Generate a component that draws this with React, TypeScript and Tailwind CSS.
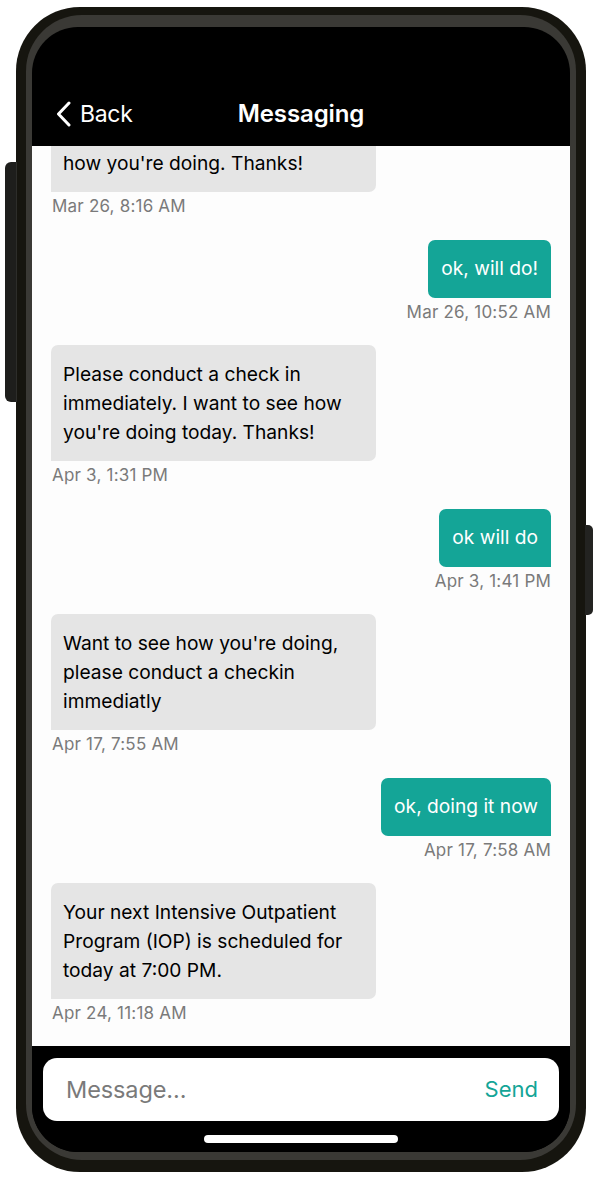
import React from "react";

type Msg = { side: "in" | "out"; lines: string[]; time: string; cut?: boolean };

const messages: Msg[] = [
  { side: "in", lines: ["how you're doing. Thanks!"], time: "Mar 26, 8:16 AM", cut: true },
  { side: "out", lines: ["ok, will do!"], time: "Mar 26, 10:52 AM" },
  { side: "in", lines: ["Please conduct a check in", "immediately. I want to see how", "you're doing today. Thanks!"], time: "Apr 3, 1:31 PM" },
  { side: "out", lines: ["ok will do"], time: "Apr 3, 1:41 PM" },
  { side: "in", lines: ["Want to see how you're doing,", "please conduct a checkin", "immediatly"], time: "Apr 17, 7:55 AM" },
  { side: "out", lines: ["ok, doing it now"], time: "Apr 17, 7:58 AM" },
  { side: "in", lines: ["Your next Intensive Outpatient", "Program (IOP) is scheduled for", "today at 7:00 PM."], time: "Apr 24, 11:18 AM" },
];

const font = { fontFamily: "Inter, 'Noto Sans', sans-serif" };

function Bubble({ m }: { m: Msg }) {
  if (m.side === "in") {
    return (
      <div className="flex flex-col items-start">
        <div
          className={
            m.cut
              ? "w-[325px] rounded-[7px] rounded-bl-none bg-[#e5e5e5] px-[12px] pt-[72.5px] pb-[14.5px] text-[19.2px] leading-[29px] text-black"
              : "w-[325px] rounded-[7px] rounded-bl-none bg-[#e5e5e5] px-[12px] py-[14.5px] text-[19.2px] leading-[29px] text-black"
          }
        >
          {m.lines.map((l, i) => (
            <div key={i} className="whitespace-nowrap">{l}</div>
          ))}
        </div>
        <div className="mt-[3px] pl-[1px] text-[17px] leading-[22px] text-[#7a7a7a] tracking-[0.2px]">{m.time}</div>
      </div>
    );
  }
  return (
    <div className="flex flex-col items-end">
      <div className="rounded-[7px] rounded-br-none bg-[#14a597] px-[13px] py-[14.5px] text-[19.2px] leading-[29px] text-white">
        {m.lines.map((l, i) => (
          <div key={i} className="whitespace-nowrap">{l}</div>
        ))}
      </div>
      <div className="mt-[3px] text-[17px] leading-[22px] text-[#7a7a7a] tracking-[0.2px]">{m.time}</div>
    </div>
  );
}

export default function App() {
  return (
    <div className="w-[600px] h-[1180px] bg-white pt-[7px] pl-[16px]" style={font}>
      <div className="relative w-[570px] h-[1165px] rounded-[64px] bg-[#16150f] pt-[8px] px-[10px] pb-[12px]">
        <div className="absolute left-[-11px] top-[155px] w-[12px] h-[240px] rounded-l-[6px] bg-[#1e1e1c] border-r border-[#2d2d2a]" />
        <div className="absolute right-[-7px] top-[518px] w-[8px] h-[90px] rounded-r-[5px] bg-[#232321]" />
        <div className="h-full rounded-[56px] bg-[#3a3935] pt-[12px] px-[6px] pb-[8px]">
          <div className="h-full rounded-[46px] bg-black overflow-hidden flex flex-col">
            <div className="h-[119px] shrink-0 pt-[72px]">
              <div className="grid grid-cols-[1fr_auto_1fr] items-center h-[30px]">
                <div className="flex items-center pl-[24px] h-[30px]">
                  <svg width="16" height="26" viewBox="0 0 16 26" fill="none" className="mr-[8px]">
                    <polyline points="13,2 2.5,13 13,24" stroke="white" strokeWidth="3" strokeLinecap="round" strokeLinejoin="round" />
                  </svg>
                  <span className="text-white text-[23px] leading-[30px] tracking-[-0.3px]">Back</span>
                </div>
                <div className="text-white text-[24px] leading-[30px] font-semibold tracking-[-0.1px]">Messaging</div>
                <div />
              </div>
            </div>
            <div className="h-[900px] shrink-0 bg-[#fdfdfd] overflow-hidden flex flex-col justify-end gap-[22.5px] px-[19px] pb-[22px]">
              {messages.map((m, i) => (
                <Bubble key={i} m={m} />
              ))}
            </div>
            <div className="flex-1 bg-black pt-[12px] px-[11px] flex flex-col items-center">
              <div className="w-full h-[63px] rounded-[14px] bg-white flex items-center justify-between pl-[23px] pr-[21px]">
                <span className="text-[23.5px] text-[#7a7a7a] tracking-[-0.1px]">Message...</span>
                <span className="text-[22px] text-[#14a597]">Send</span>
              </div>
              <div className="mt-[14px] w-[194px] h-[8px] rounded-full bg-white" />
            </div>
          </div>
        </div>
      </div>
    </div>
  );
}
